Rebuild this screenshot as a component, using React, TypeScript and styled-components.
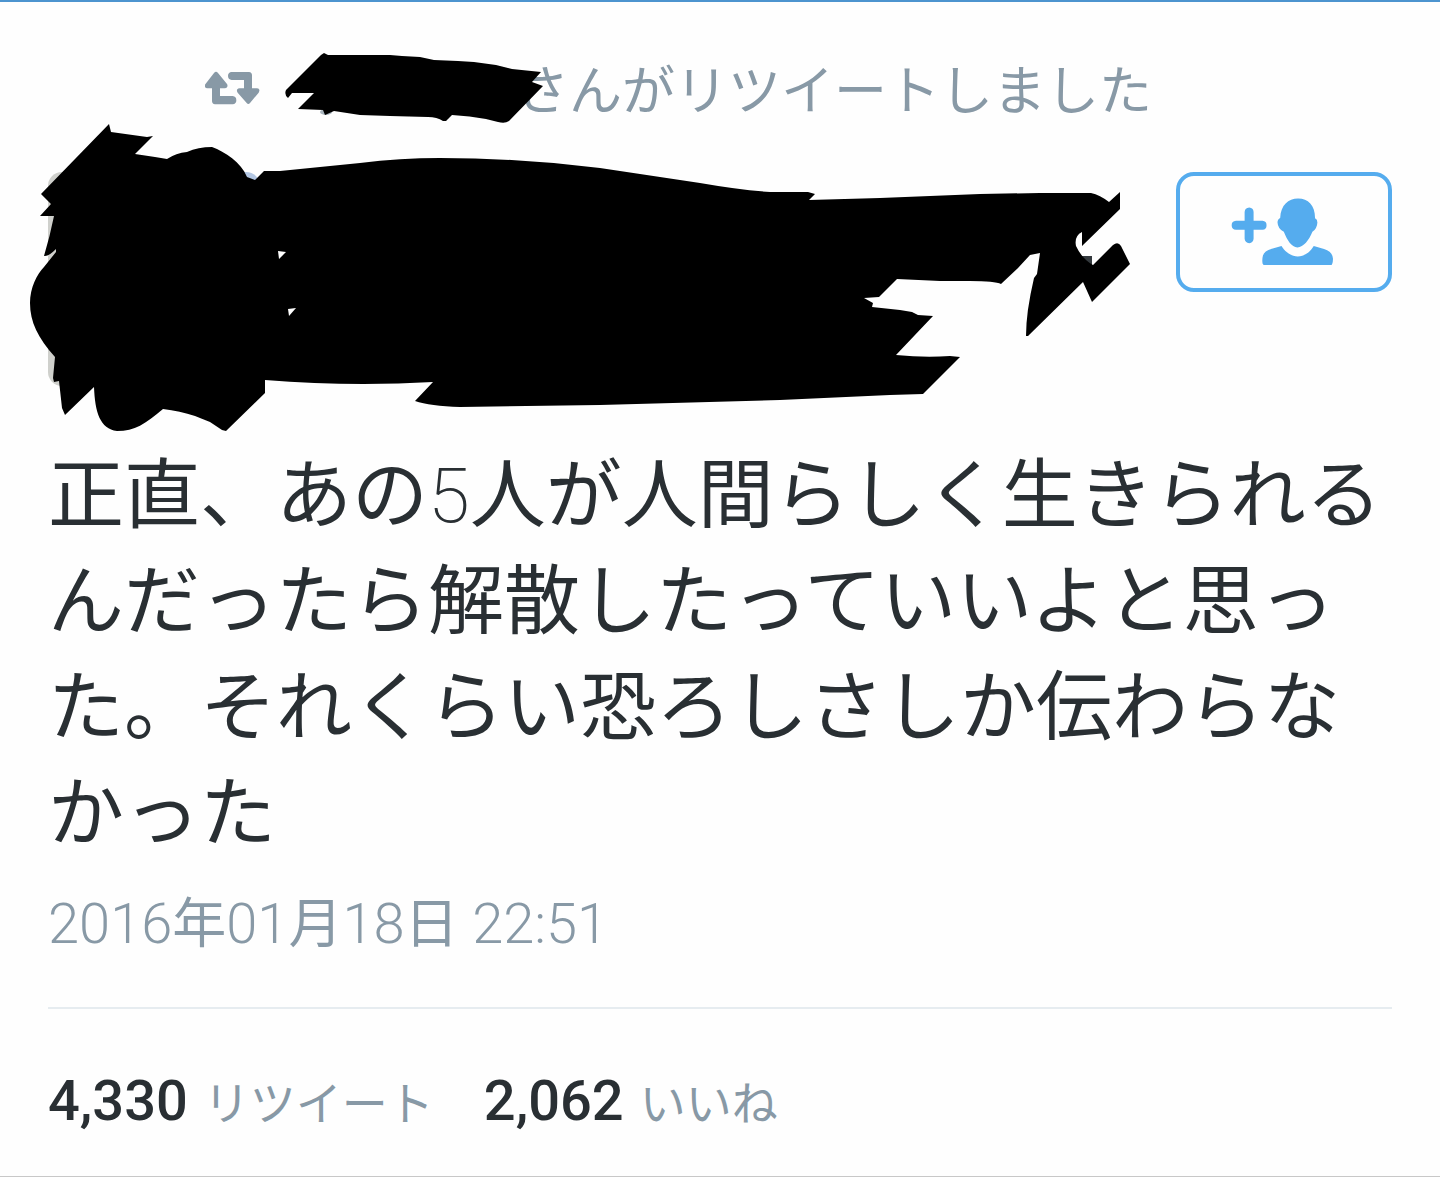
import React from "react";
import styled, { createGlobalStyle } from "styled-components";

const GlobalStyle = createGlobalStyle`
  * { box-sizing: border-box; }
  body {
    margin: 0;
    background: #fefefe;
    color: #292f33;
    font-family: Roboto, "Noto Sans CJK JP", sans-serif;
  }
`;

const Tweet = styled.article`
  border-top: 2px solid #4c94cf;
  border-bottom: 1px solid #c8c8c8;
  padding: 60px 48px 45px;
`;

const RetweetedBy = styled.header`
  display: flex;
  align-items: center;
  height: 60px;
  padding-left: 157px;
  color: #8899a6;
  font-size: 53px;
  line-height: 60px;
  font-weight: 400;
  white-space: nowrap;
`;

const RetweetIcon = styled.svg`
  flex: none;
  width: 55px;
  height: 34px;
  margin-bottom: 8px;
`;

const NameSlot = styled.span`
  position: relative;
  flex: none;
  width: 256px;
  height: 60px;
`;

const NameScribble = styled.svg`
  position: absolute;
  left: 22px;
  top: -10px;
  width: 264px;
  height: 72px;
`;

const Author = styled.section`
  position: relative;
  display: flex;
  justify-content: space-between;
  align-items: flex-start;
  height: 270px;
  padding-top: 50px;
`;

const Avatar = styled.div`
  width: 212px;
  height: 214px;
  border-radius: 14px;
  background: linear-gradient(90deg, #cfd0cc 50%, #b4c7e3 50%);
`;

const AuthorScribble = styled.svg`
  position: absolute;
  left: -20px;
  top: 0;
  width: 1104px;
  height: 312px;
`;

const FollowButton = styled.button`
  display: flex;
  align-items: center;
  justify-content: center;
  width: 216px;
  height: 120px;
  padding: 0 4px 2px 0;
  border: 4px solid #55acee;
  border-radius: 18px;
  background: transparent;
  color: #55acee;
`;

const Body = styled.p`
  margin: 51px 0 0;
  font-size: 76px;
  line-height: 106px;
  font-weight: 400;
`;

const BodyDigit = styled.span`
  font-weight: 200;
`;

const Time = styled.time`
  display: block;
  margin: 28px 0 52px;
  color: #8899a6;
  font-size: 54px;
  line-height: 60px;
  font-weight: 400;
`;

const TimeDigits = styled.span`
  font-size: 56px;
  line-height: 1;
  font-weight: 300;
`;

const Stats = styled.footer`
  display: flex;
  gap: 50px;
  padding-top: 62px;
  border-top: 2px solid #e6ecf0;
`;

const Stat = styled.a`
  display: flex;
  align-items: baseline;
  gap: 16px;
  height: 60px;
  color: #8899a6;
  font-size: 46px;
  line-height: 60px;
  font-weight: 400;
  text-decoration: none;
  white-space: nowrap;
`;

const Count = styled.strong`
  color: #292f33;
  font-size: 56px;
  font-weight: 500;
`;

export default function App() {
  return (
    <>
      <GlobalStyle />
      <Tweet>
        <RetweetedBy>
          <RetweetIcon viewBox="75 210 165 102" aria-hidden="true">
            <path
              fill="currentColor"
              d="M108 212 Q111 212 114 216 L141 249 Q144 254 141 259 Q139 262 134 262 H120 V285 H158 Q169 286 169 298 Q169 309 158 310 H105 Q96 309 96 300 V262 H82 Q77 262 75 258 Q73 253 77 248 L102 216 Q105 212 108 212 Z M155 213 H207 Q216 214 216 223 V262 H230 Q236 262 238 266 Q239 270 236 275 L210 306 Q205 312 200 306 L173 275 Q169 269 172 265 Q174 262 179 262 H192 V237 H155 Q144 236 144 225 Q144 214 155 213 Z"
            />
          </RetweetIcon>
          <NameSlot>
            <NameScribble viewBox="282 52 264 72" aria-hidden="true">
              <ellipse cx="326" cy="112" rx="6" ry="3" fill="#a9b5be" />
              <path d="M321 55 L324 53 L328 55 L390 55 L402 56 L420 57 L434 60 L458 61 L474 62 L496 65 L512 69 L541 72 L532 82 L543 86 L509 121 Q505 124 498 122 L486 119 Q470 116 452 115 L446 121 L443 121 Q437 117 428 117 L390 116 L360 115 L334 111 L325 115 L323 110 L298 109 L314 93 L292 93 L288 98 Q284 95 286 90 Z" />
            </NameScribble>
          </NameSlot>
          さんがリツイートしました
        </RetweetedBy>

        <Author>
          <Avatar />
          <AuthorScribble viewBox="28 122 1104 312" aria-hidden="true">
            <rect x="1082" y="256" width="10" height="10" fill="#343a3e" />
            <path
              fillRule="evenodd"
              d="M109 124 L111 132 L147 137 L153 136 L135 154 L155 157 L167 159 Q176 153 187 152 Q198 147 212 147 C225 152 241 162 247 177 L255 180 L264 171 L280 171 L360 163 Q400 158 440 158 Q520 158 600 168 L700 183 Q740 190 770 192 L808 192 L815 194 L809 200 L880 198 L980 194 L1040 193 L1091 193 Q1100 195 1109 202 L1120 192 V209 L1082 246 V232 Q1074 236 1076 246 Q1082 259 1093 265 L1113 245 Q1118 241 1121 246 L1130 264 L1092 302 L1083 282 L1028 336 L1026 336 Q1026 312 1034 278 L1037 274 L1040 253 L1030 255 L1018 268 L1001 284 Q995 281 970 281 L940 281 L897 279 L879 297 L864 298 L873 303 L872 307 L900 310 L912 312 L918 315 L933 316 L896 355 Q925 358 950 356 L960 357 L923 394 L890 395 L780 400 L600 405 L460 407 Q430 406 415 401 L433 382 Q350 387 265 380 L265 393 L226 431 L222 430 L210 422 L195 416 Q180 411 163 409 C145 424 135 431 117 431 C100 429 95 412 94 387 L65 415 L62 408 L59 381 L54 382 L53 378 L55 357 C38 338 30 322 30 303 C30 288 37 274 44 267 L56 252 V249 Q48 257 44 256 Q50 236 54 216 L40 216 L51 204 L41 194 Z M278 251 L286 252 L279 259 Z M288 309 L296 308 L289 316 Z"
            />
          </AuthorScribble>
          <FollowButton type="button" aria-label="フォローする">
            <svg width="103" height="69" viewBox="392 140 310 206" fill="currentColor" aria-hidden="true">
              <path d="M447 171 Q459 172 460 184 V211 H487 Q499 212 499 224 Q499 237 487 238 H460 V265 Q459 277 447 278 Q434 277 433 265 V238 H407 Q394 237 394 224 Q394 212 407 211 H433 V184 Q434 172 447 171 Z" />
              <path d="M594 144 C624 144 645 164 645 203 Q652 206 652 216 Q651 235 637 244 C627 269 610 291 592 291 C574 291 561 269 551 244 Q533 235 532 216 Q532 205 540 202 C542 164 564 144 594 144 Z" />
              <path d="M544 287 C555 305 573 318 593 318 C613 318 630 306 641 287 L672 296 Q698 304 699 325 Q699 336 696 342 Q695 344 690 344 H493 Q488 344 487 339 Q485 328 488 316 Q492 301 515 295 Z" />
            </svg>
          </FollowButton>
        </Author>

        <Body>
          正直、あの<BodyDigit>5</BodyDigit>人が人間らしく生きられるんだったら解散したっていいよと思った。それくらい恐ろしさしか伝わらなかった
        </Body>
        <Time dateTime="2016-01-18T22:51">
          <TimeDigits>2016</TimeDigits>年<TimeDigits>01</TimeDigits>月
          <TimeDigits>18</TimeDigits>日<TimeDigits> 22:51</TimeDigits>
        </Time>

        <Stats>
          <Stat href="#retweets">
            <Count>4,330</Count>リツイート
          </Stat>
          <Stat href="#likes">
            <Count>2,062</Count>いいね
          </Stat>
        </Stats>
      </Tweet>
    </>
  );
}
